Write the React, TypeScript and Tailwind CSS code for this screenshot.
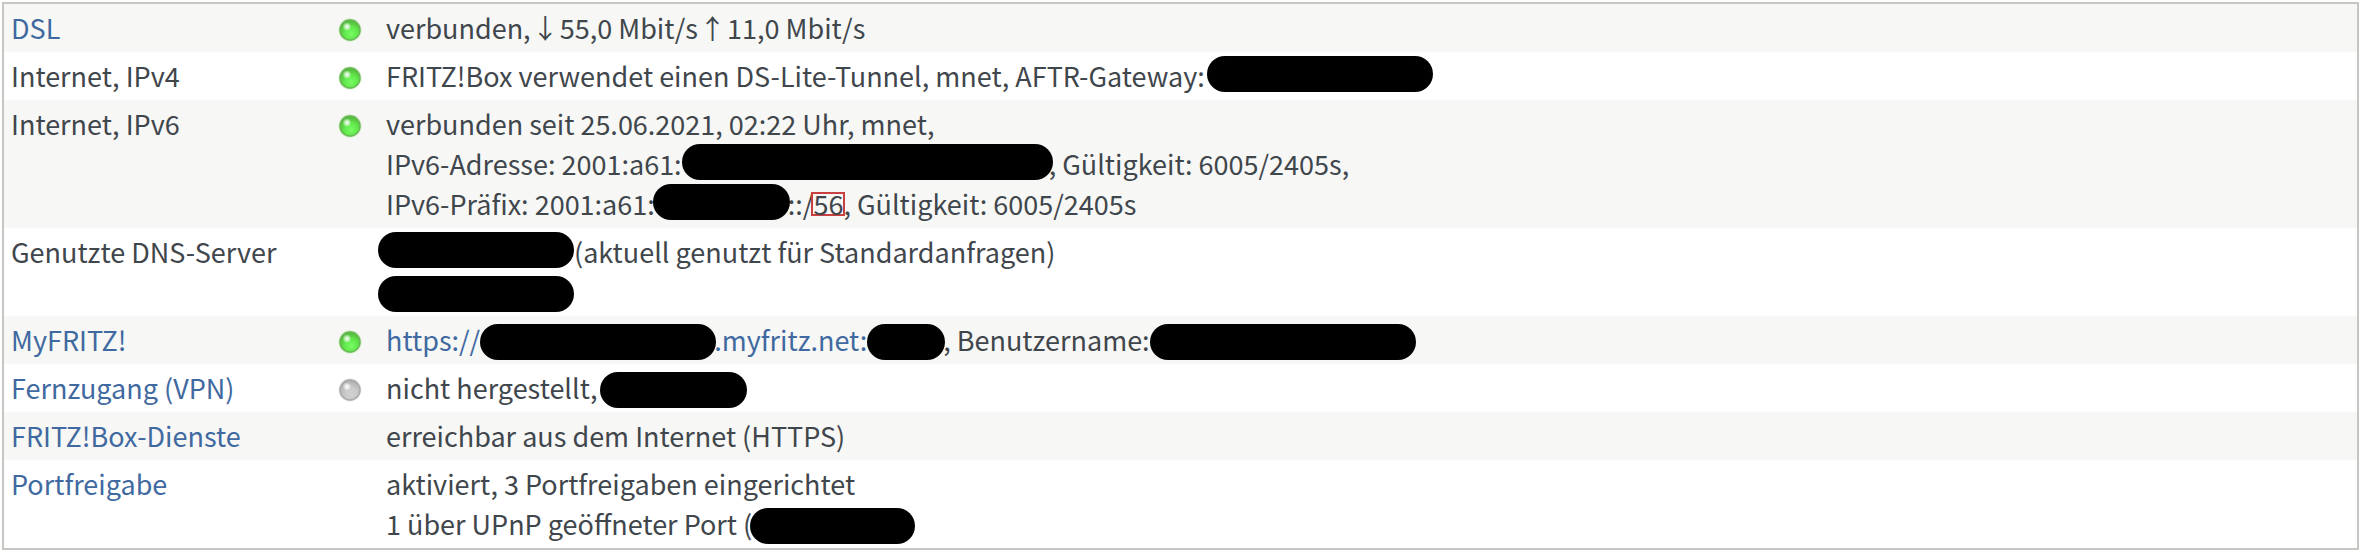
import type { ReactNode } from "react";

type LedState = "on" | "off";

function Led({ state }: { state: LedState }) {
  const on = state === "on";
  const id = `led-${state}`;
  return (
    <svg
      viewBox="0 0 24 24"
      className="mx-auto block size-6"
      role="img"
      aria-label={on ? "aktiv" : "inaktiv"}
    >
      <defs>
        <radialGradient id={id} cx="0.55" cy="0.68" r="0.62">
          <stop offset="0" stopColor={on ? "#78fb63" : "#d2d2d2"} />
          <stop offset="0.5" stopColor={on ? "#62ea4d" : "#c9c9c9"} />
          <stop offset="1" stopColor={on ? "#56b93f" : "#b2b2b2"} />
        </radialGradient>
        <radialGradient id={`${id}-shine`}>
          <stop offset="0" stopColor="#fff" stopOpacity="0.95" />
          <stop offset="0.4" stopColor="#fff" stopOpacity="0.7" />
          <stop offset="1" stopColor="#fff" stopOpacity="0" />
        </radialGradient>
      </defs>
      <circle cx="12" cy="12" r="11.4" fill={on ? "#a9dc9b" : "#d6d6d6"} opacity="0.7" />
      <circle cx="12" cy="12" r="10" fill={`url(#${id})`} stroke={on ? "#66b852" : "#a9a9a9"} strokeWidth="1.3" />
      <circle cx="9" cy="8.6" r="4.4" fill={`url(#${id}-shine)`} />
    </svg>
  );
}

function Redacted({ className }: { className: string }) {
  return (
    <span
      role="img"
      aria-label="geschwärzt"
      className={`relative inline-block h-9 rounded-full bg-black ${className}`}
    />
  );
}

function TextLink({ children }: { children: ReactNode }) {
  return (
    <a href="#" className="text-[#3f69a0]">
      {children}
    </a>
  );
}

function Arrow({ children }: { children: string }) {
  return <span className="-mx-[5px]">{children}</span>;
}

type Row = { label: ReactNode; led?: LedState; lines: ReactNode[] };

const rows: Row[] = [
  {
    label: <TextLink>DSL</TextLink>,
    led: "on",
    lines: [
      <>
        verbunden, <Arrow>↓</Arrow> 55,0 Mbit/s <Arrow>↑</Arrow> 11,0 Mbit/s
      </>,
    ],
  },
  {
    label: "Internet, IPv4",
    led: "on",
    lines: [
      <>
        FRITZ!Box verwendet einen DS-Lite-Tunnel, mnet, AFTR-Gateway:
        <Redacted className="ml-0.5 w-[226px] align-top" />
      </>,
    ],
  },
  {
    label: "Internet, IPv6",
    led: "on",
    lines: [
      "verbunden seit 25.06.2021, 02:22 Uhr, mnet,",
      <>
        IPv6-Adresse: 2001:a61:
        <Redacted className="-mr-1 w-[371px] align-top" />, Gültigkeit: 6005/2405s,
      </>,
      <>
        IPv6-Präfix: 2001:a61:
        <Redacted className="-mx-0.5 w-[137px] align-top" />
        ::/
        <span className="-mx-0.5 inline-block border-2 border-[#c8403f] leading-5">56</span>, Gültigkeit:
        6005/2405s
      </>,
    ],
  },
  {
    label: "Genutzte DNS-Server",
    lines: [
      <>
        <Redacted className="-ml-2 w-[196px] align-top" />
        (aktuell genutzt für Standardanfragen)
      </>,
      <Redacted className="-ml-2 w-[196px] align-bottom" />,
    ],
  },
  {
    label: <TextLink>MyFRITZ!</TextLink>,
    led: "on",
    lines: [
      <>
        <TextLink>
          https://
          <Redacted className="-mr-0.5 w-[236px] align-bottom" />
          .myfritz.net:
          <Redacted className="-mr-0.5 w-[78px] align-bottom" />
        </TextLink>
        , Benutzername:
        <Redacted className="w-[266px] align-bottom" />
      </>,
    ],
  },
  {
    label: <TextLink>Fernzugang (VPN)</TextLink>,
    led: "off",
    lines: [
      <>
        nicht hergestellt,
        <Redacted className="ml-0.5 w-[147px] align-bottom" />
      </>,
    ],
  },
  {
    label: <TextLink>FRITZ!Box-Dienste</TextLink>,
    lines: ["erreichbar aus dem Internet (HTTPS)"],
  },
  {
    label: <TextLink>Portfreigabe</TextLink>,
    lines: [
      "aktiviert, 3 Portfreigaben eingerichtet",
      <>
        1 über UPnP geöffneter Port (
        <Redacted className="-ml-0.5 w-[165px] align-bottom" />
      </>,
    ],
  },
];

export default function App() {
  return (
    <main className="bg-white pt-0.5 pr-px pl-0.5 font-['Noto_Sans_CJK_SC',sans-serif] text-[27px] leading-10 text-[#3f464c]">
      <div className="border-2 border-[#c6c7c2]">
        <table className="w-full table-fixed border-collapse">
          <colgroup>
            <col className="w-[319px]" />
            <col className="w-[53px]" />
            <col />
          </colgroup>
          <tbody>
            {rows.map((row, i) => (
              <tr key={i} className="align-top odd:bg-[#f7f7f5]">
                <th scope="row" className="py-1 pl-[7px] text-left font-normal">
                  {row.label}
                </th>
                <td className="pt-3.5">{row.led && <Led state={row.led} />}</td>
                <td className="py-1 pl-[10px]">
                  {row.lines.map((line, j) => (
                    <div key={j}>{line}</div>
                  ))}
                </td>
              </tr>
            ))}
          </tbody>
        </table>
      </div>
    </main>
  );
}
